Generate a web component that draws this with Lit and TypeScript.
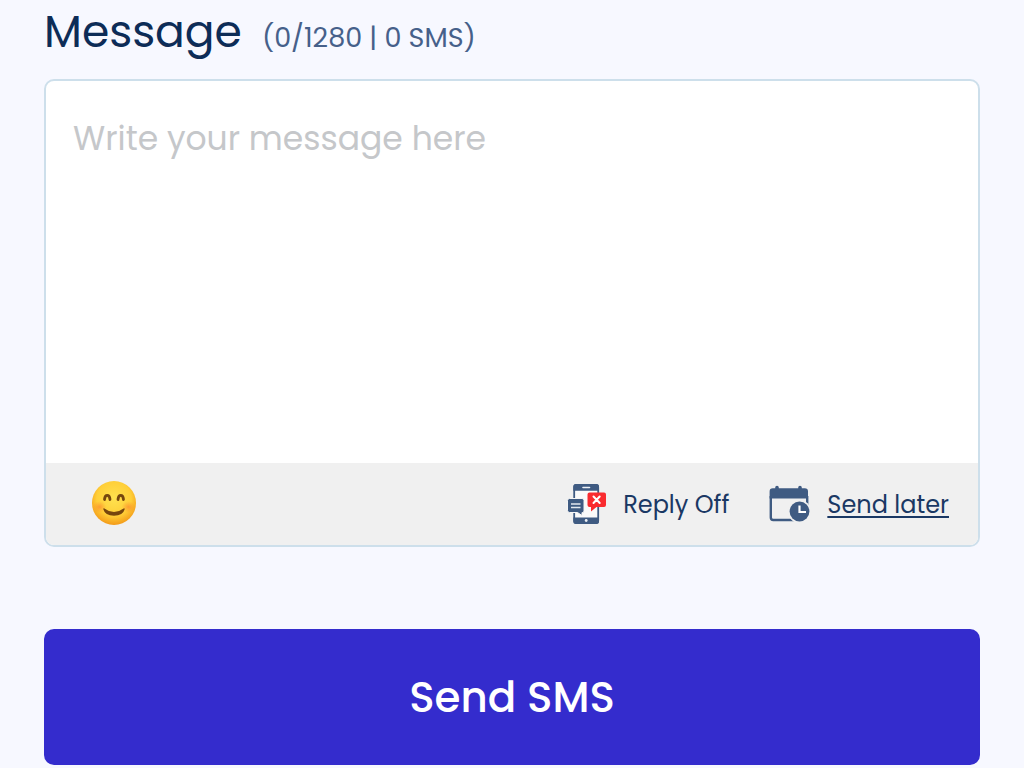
import { LitElement, html, css } from "lit";
import { customElement, state } from "lit/decorators.js";

@customElement("app-root")
export class AppRoot extends LitElement {
  static styles = css`
    :host {
      display: block;
      min-height: 100vh;
      box-sizing: border-box;
      padding: 2px 44px 0;
      background: #f7f8ff;
      color: #0d2c57;
      font-family: Poppins, Inter, "Open Sans", sans-serif;
    }
    .form {
      display: flex;
      flex-direction: column;
      margin: 0;
    }
    .heading {
      display: flex;
      align-items: baseline;
      gap: 20px;
      height: 77px;
      line-height: 60px;
    }
    .title {
      font-size: 44px;
    }
    .count {
      font-size: 27px;
      color: #46608a;
    }
    .box {
      display: flex;
      flex-direction: column;
      overflow: hidden;
      border: 2px solid #cddfeb;
      border-radius: 10px;
      background: #fff;
    }
    .message {
      display: block;
      box-sizing: border-box;
      width: 100%;
      height: 382px;
      padding: 34px 27px;
      border: 0;
      outline: 0;
      resize: none;
      background: transparent;
      color: inherit;
      font: inherit;
      font-size: 33px;
      line-height: 48px;
    }
    .message::placeholder {
      color: #c5c7ca;
      opacity: 1;
    }
    .toolbar {
      display: flex;
      align-items: center;
      gap: 40px;
      height: 82px;
      box-sizing: border-box;
      padding: 0 29px 0 45px;
      background: #f0f0f0;
      font-size: 24px;
    }
    .tool {
      display: flex;
      align-items: center;
      gap: 16px;
      padding: 0;
      border: 0;
      background: none;
      color: #1a3864;
      font: inherit;
      white-space: nowrap;
      cursor: pointer;
    }
    .emoji {
      margin-right: auto;
    }
    .later {
      text-decoration: underline;
      text-decoration-thickness: 2px;
      text-underline-offset: 3px;
    }
    svg {
      display: block;
      flex: none;
    }
    .send {
      height: 136px;
      margin-top: 82px;
      padding: 0;
      border: 0;
      border-radius: 10px;
      background: #342ccd;
      color: #fff;
      font: inherit;
      font-size: 42px;
      font-weight: 500;
      cursor: pointer;
    }
  `;

  @state() private text = "";
  @state() private replyOn = false;

  private onInput(e: Event) {
    this.text = (e.target as HTMLTextAreaElement).value;
  }

  render() {
    const parts = Math.ceil(this.text.length / 160);
    return html`
      <form class="form" @submit=${(e: Event) => e.preventDefault()}>
        <div class="heading">
          <label class="title" for="message">Message</label>
          <span class="count">(${this.text.length}/1280 | ${parts} SMS)</span>
        </div>
        <div class="box">
          <textarea
            id="message"
            class="message"
            maxlength="1280"
            placeholder="Write your message here"
            @input=${this.onInput}
          ></textarea>
          <div class="toolbar">
            <button class="tool emoji" type="button" aria-label="Insert emoji">
              <svg width="46" height="46" viewBox="0 1 46 46" aria-hidden="true">
                <defs>
                  <radialGradient id="face" cx=".5" cy=".4" r=".6">
                    <stop offset="0" stop-color="#ffe14f" />
                    <stop offset=".65" stop-color="#ffcf38" />
                    <stop offset="1" stop-color="#f39a18" />
                  </radialGradient>
                  <radialGradient id="blush">
                    <stop offset="0" stop-color="#fb7a2d" stop-opacity=".6" />
                    <stop offset="1" stop-color="#fb8a2d" stop-opacity="0" />
                  </radialGradient>
                </defs>
                <circle cx="23" cy="23" r="22" fill="url(#face)" />
                <ellipse cx="8.500" cy="27" rx="7" ry="6" fill="url(#blush)" />
                <ellipse cx="37.500" cy="27" rx="7" ry="6" fill="url(#blush)" />
                <path d="M13.500 19.500C14 14 18.500 14 19 19.500M27 19.500C27.500 14 32 14 32.500 19.500"
                  fill="none" stroke="#76460e" stroke-width="2.8" stroke-linecap="round" />
                <path d="M13 29Q23 36.500 33 29Q31.500 34.800 23 35Q14.500 34.800 13 29Z"
                  fill="#76460e" stroke="#76460e" stroke-width="1.400" stroke-linejoin="round" />
              </svg>
            </button>
            <button class="tool" type="button" aria-pressed=${this.replyOn} @click=${() => (this.replyOn = !this.replyOn)}>
              <svg width="40" height="42" viewBox="0 0 40 42" aria-hidden="true">
                <rect x="7.200" y="2" width="24" height="38" rx="2.500" fill="#fafafa" stroke="#3f5b82" stroke-width="1.800" />
                <path d="M6.300 7.800V3.500Q6.300 1 8.800 1H29.500Q32 1 32 3.500V7.800ZM6.300 34.500H32V38.500Q32 41 29.500 41H8.800Q6.300 41 6.300 38.500Z" fill="#3f5b82" />
                <path d="M16 4.500H22.500" stroke="#eef2f7" stroke-width="1.600" stroke-linecap="round" />
                <circle cx="19.200" cy="37.500" r="1.400" fill="#eef2f7" />
                <path d="M2.500 15.500H15Q17 15.500 17 17.500V28Q17 29.500 15.500 29.500H15V32.500L10.500 29.500H2.500Q.5 29.500.5 27.500V17.500Q.5 15.500 2.500 15.500Z" fill="#3f5b82" stroke="#f5f5f5" stroke-width="1" />
                <path d="M4 21H13.500M4 24.500H13.500" stroke="#e3e9f0" stroke-width="1.500" />
                <path d="M22.500 9.500H37Q39 9.500 39 11.500V22Q39 24 37 24H29.500L24 28.500V24H22.500Q20.500 24 20.500 22V11.500Q20.500 9.500 22.500 9.500Z" fill="#f92b2f" />
                <path d="M26.500 13.500L32.700 20M32.700 13.500L26.500 20" stroke="#fff" stroke-width="2" stroke-linecap="round" />
              </svg>
              <span>Reply ${this.replyOn ? "On" : "Off"}</span>
            </button>
            <button class="tool" type="button">
              <svg width="42" height="38" viewBox="0 0 42 38" aria-hidden="true">
                <path d="M1.800 11V32.500Q1.800 35 4.300 35H35.700Q38.200 35 38.200 32.500V11" fill="none" stroke="#3f5b82" stroke-width="2.400" />
                <path d="M.6 13.500V6.500Q.6 3.300 3.800 3.300H6.200V2.500Q6.200.7 8 .7Q9.800.7 9.800 2.500V3.300H29.200V2.500Q29.200.7 31 .7Q32.800.7 32.800 2.500V3.300H35.800Q39 3.300 39 6.500V13.500Z" fill="#3f5b82" />
                <circle cx="30.500" cy="26.500" r="11.500" fill="#f0f0f0" />
                <path d="M36 33H42V38H30V36Z" fill="#f0f0f0" />
                <circle cx="30.500" cy="26.500" r="9.900" fill="#3f5b82" />
                <path d="M30.500 20.500V27H37" fill="none" stroke="#fff" stroke-width="2.200" />
              </svg>
              <span class="later">Send later</span>
            </button>
          </div>
        </div>
        <button class="send" type="submit">Send SMS</button>
      </form>
    `;
  }
}
